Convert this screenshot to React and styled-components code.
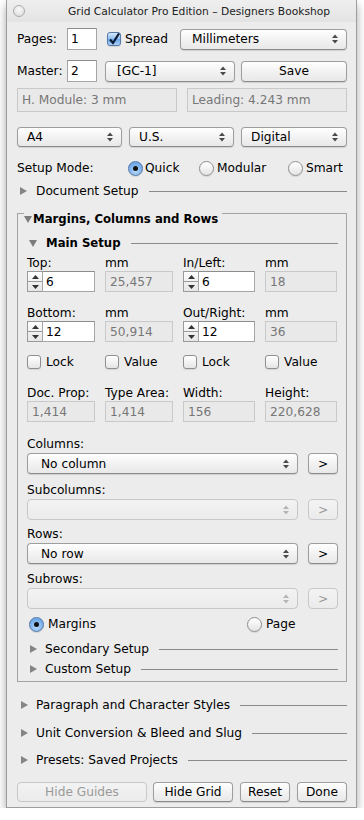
import React from 'react'
import styled, { createGlobalStyle, css } from 'styled-components'

const GlobalStyle = createGlobalStyle`
  html, body { margin: 0; padding: 0; background: #fff; }
  body {
    font-family: "DejaVu Sans", "Liberation Sans", sans-serif;
    font-size: 12.2px;
    color: #000;
  }
  * { box-sizing: border-box; }
`

const Window = styled.div`
  margin-left: 6px;
  width: 351px;
  height: 808px;
  background: #ececec;
  border: 1px solid #9d9d9d;
  border-top: none;
  box-shadow: 0 5px 9px rgba(0, 0, 0, 0.35);
  display: flex;
  flex-direction: column;
`

const TitleBar = styled.div`
  height: 22px;
  display: flex;
  align-items: center;
  padding-left: 6px;
  background: linear-gradient(#efefef, #e3e3e3);
  color: #222;
  font-size: 10.7px;
`

const CloseDot = styled.div`
  width: 12px;
  height: 12px;
  border-radius: 50%;
  border: 1px solid #ababab;
  background: radial-gradient(circle at 50% 35%, #fafafa, #d8d8d8);
`

const Title = styled.div`
  margin-left: 43px;
  white-space: nowrap;
`

const Body = styled.div`
  padding: 6px 9px 0 10px;
  display: flex;
  flex-direction: column;
`

const Row = styled.div`
  display: flex;
  align-items: center;
  height: ${p => p.$h || 22}px;
  margin-top: ${p => p.$mt || 0}px;
  gap: ${p => p.$gap || 0}px;
`

const Label = styled.div`
  white-space: nowrap;
  width: ${p => (p.$w ? `${p.$w}px` : 'auto')};
  flex-shrink: 0;
`

const TextBox = styled.div`
  width: ${p => p.$w}px;
  height: ${p => p.$h || 22}px;
  background: #fff;
  border: 1px solid #a5a5a5;
  border-top-color: #8c8c8c;
  padding: 0 3px;
  display: flex;
  align-items: center;
  flex-shrink: 0;
`

const ReadOnlyBox = styled.div`
  width: ${p => (p.$w ? `${p.$w}px` : '100%')};
  height: ${p => p.$h || 21}px;
  background: #e9e9e9;
  border: 1px solid #c9c9c9;
  color: #777;
  padding: 0 4px;
  display: flex;
  align-items: center;
  white-space: nowrap;
  flex-shrink: 0;
`

const bevel = css`
  border: 1px solid #9e9e9e;
  border-bottom-color: #8a8a8a;
  border-radius: 4px;
  background: linear-gradient(#ffffff, #f0f0f0 60%, #e9e9e9);
  box-shadow: 0 1px 1px rgba(0, 0, 0, 0.12);
`

const bevelOff = css`
  border: 1px solid #c8c8c8;
  border-radius: 4px;
  background: linear-gradient(#f3f3f3, #ebebeb);
  color: #9a9a9a;
`

const Popup = styled.div`
  ${p => (p.$off ? bevelOff : bevel)};
  width: ${p => (p.$w ? `${p.$w}px` : 'auto')};
  flex: ${p => (p.$w ? '0 0 auto' : '1')};
  height: ${p => p.$h || 21}px;
  display: flex;
  align-items: center;
  padding: 0 8px 0 ${p => p.$pl || 11}px;
  white-space: nowrap;
`

const PopupText = styled.span`
  flex: 1;
`

const Button = styled.div`
  ${p => (p.$off ? bevelOff : bevel)};
  width: ${p => p.$w}px;
  height: ${p => p.$h || 21}px;
  display: flex;
  align-items: center;
  justify-content: center;
  flex-shrink: 0;
  white-space: nowrap;
`

const Arrows = ({ off }) => (
  <svg width="6" height="10" viewBox="0 0 6 10">
    <path d="M0 4 L3 0.5 L6 4 Z M0 6 L3 9.5 L6 6 Z" fill={off ? '#b5b5b5' : '#4a4a4a'} />
  </svg>
)

const Select = ({ children, off, ...rest }) => (
  <Popup $off={off} {...rest}>
    <PopupText>{children}</PopupText>
    <Arrows off={off} />
  </Popup>
)

const CheckBox = styled.div`
  width: 14px;
  height: 14px;
  border-radius: 3px;
  flex-shrink: 0;
  border: 1px solid ${p => (p.$on ? '#5478a8' : '#8f8f8f')};
  background: ${p =>
    p.$on
      ? 'linear-gradient(#d6e8fb, #8fbdf0 50%, #6aa5ea 51%, #a9d0f7)'
      : 'linear-gradient(#ffffff, #e6e6e6)'};
  display: flex;
  align-items: center;
  justify-content: center;
  box-shadow: 0 1px 1px rgba(0, 0, 0, 0.1);
`

const Radio = styled.div`
  width: 15px;
  height: 15px;
  border-radius: 50%;
  flex-shrink: 0;
  border: 1px solid ${p => (p.$on ? '#5478a8' : '#8f8f8f')};
  background: ${p =>
    p.$on
      ? 'radial-gradient(circle at 50% 70%, #b8dafa, #6fa8e8 70%)'
      : 'linear-gradient(#ffffff, #e4e4e4)'};
  display: flex;
  align-items: center;
  justify-content: center;
  box-shadow: 0 1px 1px rgba(0, 0, 0, 0.1);
`

const RadioDot = styled.div`
  width: 5px;
  height: 5px;
  border-radius: 50%;
  background: #111;
`

const Option = styled.div`
  display: flex;
  align-items: center;
  gap: ${p => p.$gap || 3}px;
  width: ${p => (p.$w ? `${p.$w}px` : 'auto')};
  flex-shrink: 0;
`

const Disclosure = styled.div`
  display: flex;
  align-items: center;
  height: 16px;
  margin-top: ${p => p.$mt || 0}px;
  padding-left: ${p => p.$pl || 0}px;
`

const DiscText = styled.div`
  margin-left: ${p => p.$gap || 10}px;
  font-weight: ${p => (p.$bold ? 'bold' : 'normal')};
  font-size: ${p => (p.$bold ? '11.7px' : 'inherit')};
  white-space: nowrap;
`

const Rule = styled.div`
  flex: 1;
  height: 1px;
  margin-left: 10px;
  background: #8a8a8a;
`

const Tri = ({ down }) =>
  down ? (
    <svg width="8" height="7" viewBox="0 0 8 7">
      <path d="M0 0 L8 0 L4 7 Z" fill="#7c7c7c" />
    </svg>
  ) : (
    <svg width="7" height="8" viewBox="0 0 7 8">
      <path d="M0 0 L7 4 L0 8 Z" fill="#858585" />
    </svg>
  )

const Check = () => (
  <svg width="12" height="12" viewBox="0 0 12 12">
    <path d="M2 6.5 L5 10 L11 0.5" stroke="#0d1a33" strokeWidth="2.2" fill="none" />
  </svg>
)

const GroupBox = styled.div`
  position: relative;
  margin-top: 14px;
  border: 1px solid #a3a3a3;
  padding: 21px 8px 0 9px;
  height: 469px;
`

const Legend = styled.div`
  position: absolute;
  top: -3px;
  left: 6px;
  display: flex;
  align-items: center;
  height: 16px;
  padding-right: 4px;
  background: #ececec;
  font-weight: bold;
  font-size: 11.7px;
  gap: 1px;
`

const FieldGrid = styled.div`
  display: grid;
  grid-template-columns: 68px 68px 72px 72px;
  column-gap: 10px;
  margin-top: ${p => p.$mt || 0}px;
`

const Cell = styled.div`
  display: flex;
  flex-direction: column;
`

const CellLabel = styled.div`
  height: 16px;
  line-height: 16px;
  white-space: nowrap;
`

const Stepper = styled.div`
  display: flex;
  height: 21px;
`

const StepButtons = styled.div`
  width: 15px;
  height: 21px;
  border: 1px solid #9a9a9a;
  border-right: none;
  background: linear-gradient(#fdfdfd, #e6e6e6);
  display: flex;
  flex-direction: column;
`

const StepHalf = styled.div`
  flex: 1;
  display: flex;
  align-items: center;
  justify-content: center;
  border-top: ${p => (p.$lower ? '1px solid #9a9a9a' : 'none')};
`

const StepInput = styled(TextBox)`
  flex: 1;
`

const StepArrow = ({ up }) => (
  <svg width="7" height="4" viewBox="0 0 7 4">
    <path d={up ? 'M0 4 L3.5 0 L7 4 Z' : 'M0 0 L3.5 4 L7 0 Z'} fill="#333" />
  </svg>
)

const StepField = ({ value }) => (
  <Stepper>
    <StepButtons>
      <StepHalf>
        <StepArrow up />
      </StepHalf>
      <StepHalf $lower>
        <StepArrow />
      </StepHalf>
    </StepButtons>
    <StepInput $h={21}>{value}</StepInput>
  </Stepper>
)

const PickBlock = styled.div`
  margin-top: ${p => p.$mt || 0}px;
  display: flex;
  flex-direction: column;
`

const PickLabel = styled.div`
  height: 17px;
  line-height: 16px;
`

const PickRow = styled.div`
  display: flex;
  gap: 10px;
`

const Picker = ({ label, value, off, mt }) => (
  <PickBlock $mt={mt}>
    <PickLabel>{label}</PickLabel>
    <PickRow>
      <Select off={off} $pl={13}>
        {value}
      </Select>
      <Button $w={30} $off={off}>
        &gt;
      </Button>
    </PickRow>
  </PickBlock>
)

export default function App() {
  return (
    <>
      <GlobalStyle />
      <Window>
        <TitleBar>
          <CloseDot />
          <Title>Grid Calculator Pro Edition – Designers Bookshop</Title>
        </TitleBar>
        <Body>
          <Row $mt={0}>
            <Label $w={50}>Pages:</Label>
            <TextBox $w={30}>1</TextBox>
            <Option $gap={4} style={{ marginLeft: 10 }}>
              <CheckBox $on>
                <Check />
              </CheckBox>
              <span>Spread</span>
            </Option>
            <Select $w={167} style={{ marginLeft: 'auto' }}>
              Millimeters
            </Select>
          </Row>
          <Row $mt={10}>
            <Label $w={50}>Master:</Label>
            <TextBox $w={30}>2</TextBox>
            <Select $w={130} style={{ marginLeft: 8 }}>
              [GC-1]
            </Select>
            <Button $w={106} style={{ marginLeft: 6 }}>
              Save
            </Button>
          </Row>
          <Row $mt={6} $h={24} $gap={10}>
            <ReadOnlyBox $w={160} $h={24}>H. Module: 3 mm</ReadOnlyBox>
            <ReadOnlyBox $w={160} $h={24}>Leading: 4.243 mm</ReadOnlyBox>
          </Row>
          <Row $mt={15} $h={20} $gap={7}>
            <Select $w={105} $h={20} $pl={9}>A4</Select>
            <Select $w={105} $h={20} $pl={9}>U.S.</Select>
            <Select $w={106} $h={20} $pl={9}>Digital</Select>
          </Row>
          <Row $mt={12} $h={18}>
            <Label $w={111}>Setup Mode:</Label>
            <Option $w={71} $gap={2}>
              <Radio $on>
                <RadioDot />
              </Radio>
              Quick
            </Option>
            <Option $w={89} $gap={3}>
              <Radio />
              Modular
            </Option>
            <Option $gap={3}>
              <Radio />
              Smart
            </Option>
          </Row>
          <Disclosure $mt={6} $pl={3}>
            <Tri />
            <DiscText $gap={9}>Document Setup</DiscText>
            <Rule />
          </Disclosure>

          <GroupBox>
            <Legend>
              <Tri down />
              <span>Margins, Columns and Rows</span>
            </Legend>
            <Disclosure $pl={2}>
              <Tri down />
              <DiscText $bold $gap={9}>Main Setup</DiscText>
              <Rule />
            </Disclosure>
            <FieldGrid $mt={4}>
              <Cell>
                <CellLabel>Top:</CellLabel>
                <StepField value="6" />
              </Cell>
              <Cell>
                <CellLabel>mm</CellLabel>
                <ReadOnlyBox>25,457</ReadOnlyBox>
              </Cell>
              <Cell>
                <CellLabel>In/Left:</CellLabel>
                <StepField value="6" />
              </Cell>
              <Cell>
                <CellLabel>mm</CellLabel>
                <ReadOnlyBox>18</ReadOnlyBox>
              </Cell>
            </FieldGrid>
            <FieldGrid $mt={13}>
              <Cell>
                <CellLabel>Bottom:</CellLabel>
                <StepField value="12" />
              </Cell>
              <Cell>
                <CellLabel>mm</CellLabel>
                <ReadOnlyBox>50,914</ReadOnlyBox>
              </Cell>
              <Cell>
                <CellLabel>Out/Right:</CellLabel>
                <StepField value="12" />
              </Cell>
              <Cell>
                <CellLabel>mm</CellLabel>
                <ReadOnlyBox>36</ReadOnlyBox>
              </Cell>
            </FieldGrid>
            <FieldGrid $mt={12} style={{ height: 16, alignItems: 'center' }}>
              <Option $gap={5}>
                <CheckBox />
                Lock
              </Option>
              <Option $gap={5}>
                <CheckBox />
                Value
              </Option>
              <Option $gap={5}>
                <CheckBox />
                Lock
              </Option>
              <Option $gap={5}>
                <CheckBox />
                Value
              </Option>
            </FieldGrid>
            <FieldGrid $mt={15}>
              <Cell>
                <CellLabel>Doc. Prop:</CellLabel>
                <ReadOnlyBox>1,414</ReadOnlyBox>
              </Cell>
              <Cell>
                <CellLabel>Type Area:</CellLabel>
                <ReadOnlyBox>1,414</ReadOnlyBox>
              </Cell>
              <Cell>
                <CellLabel>Width:</CellLabel>
                <ReadOnlyBox>156</ReadOnlyBox>
              </Cell>
              <Cell>
                <CellLabel>Height:</CellLabel>
                <ReadOnlyBox>220,628</ReadOnlyBox>
              </Cell>
            </FieldGrid>
            <Picker mt={14} label="Columns:" value="No column" />
            <Picker mt={8} label="Subcolumns:" value="" off />
            <Picker mt={6} label="Rows:" value="No row" />
            <Picker mt={7} label="Subrows:" value="" off />
            <Row $mt={7} $h={16} style={{ paddingLeft: 2 }}>
              <Option $w={218} $gap={4}>
                <Radio $on>
                  <RadioDot />
                </Radio>
                Margins
              </Option>
              <Option $gap={4}>
                <Radio />
                Page
              </Option>
            </Row>
            <Disclosure $mt={9} $pl={3}>
              <Tri />
              <DiscText $gap={8}>Secondary Setup</DiscText>
              <Rule />
            </Disclosure>
            <Disclosure $mt={4} $pl={3}>
              <Tri />
              <DiscText $gap={8}>Custom Setup</DiscText>
              <Rule />
            </Disclosure>
          </GroupBox>

          <Disclosure $mt={15} $pl={4}>
            <Tri />
            <DiscText $gap={8}>Paragraph and Character Styles</DiscText>
            <Rule />
          </Disclosure>
          <Disclosure $mt={12} $pl={4}>
            <Tri />
            <DiscText $gap={8}>Unit Conversion &amp; Bleed and Slug</DiscText>
            <Rule />
          </Disclosure>
          <Disclosure $mt={11} $pl={4}>
            <Tri />
            <DiscText $gap={8}>Presets: Saved Projects</DiscText>
            <Rule />
          </Disclosure>
          <Row $mt={14} $h={20}>
            <Button $w={130} $h={20} $off>
              Hide Guides
            </Button>
            <Button $w={80} $h={20} style={{ marginLeft: 6 }}>
              Hide Grid
            </Button>
            <Button $w={50} $h={20} style={{ marginLeft: 7 }}>
              Reset
            </Button>
            <Button $w={50} $h={20} style={{ marginLeft: 7 }}>
              Done
            </Button>
          </Row>
        </Body>
      </Window>
    </>
  )
}
